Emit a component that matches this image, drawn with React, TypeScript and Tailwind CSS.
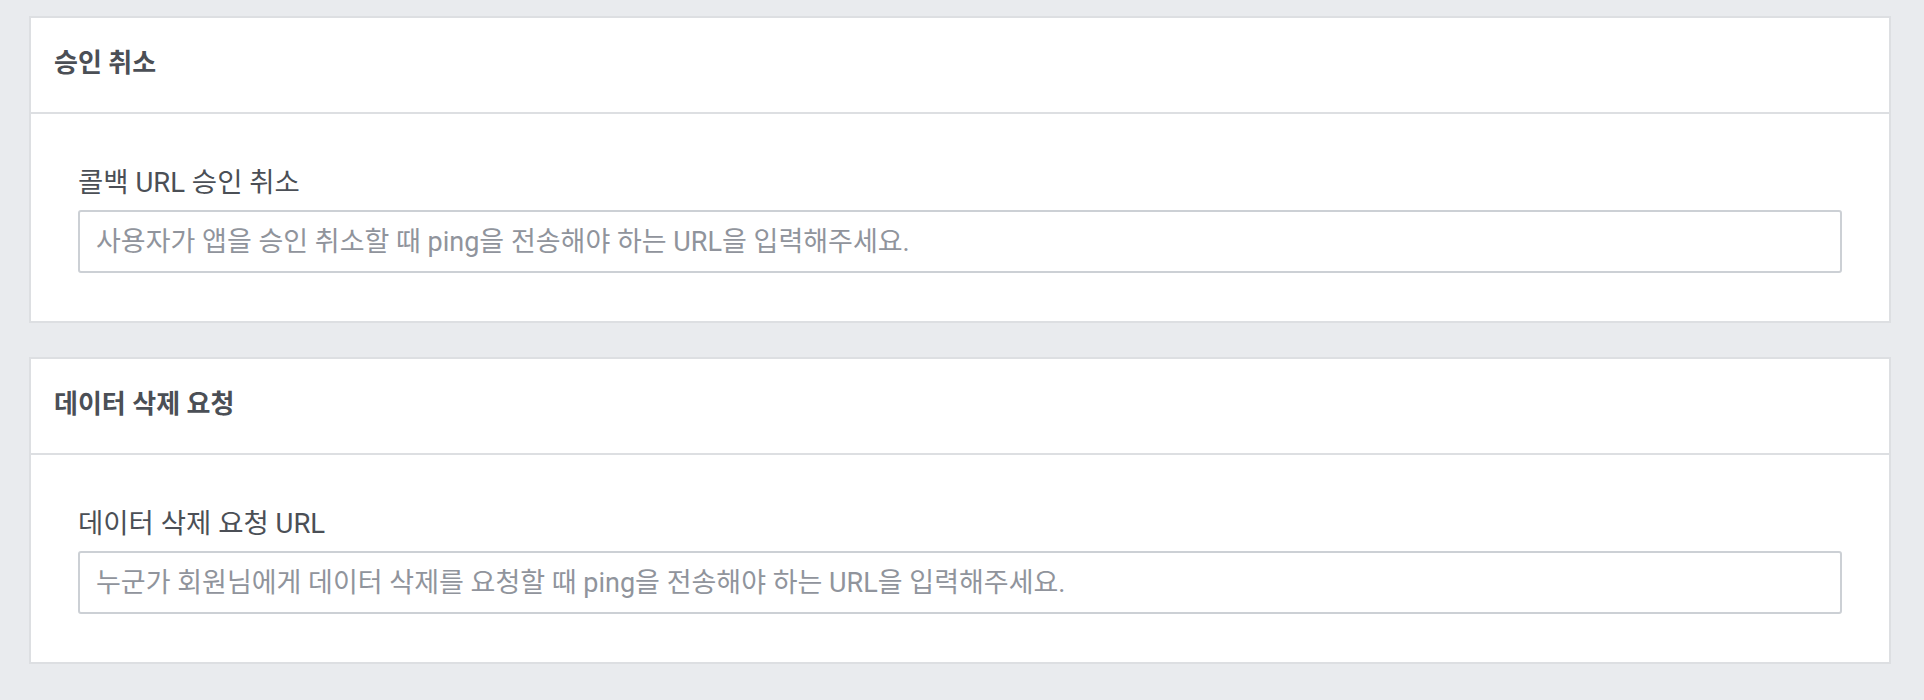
import React from 'react';

interface SectionProps {
    title: string;
    label: string;
    placeholder: string;
}

function Section({ title, label, placeholder }: SectionProps) {
    return (
        <div className="bg-white border-2 border-[#dddfe2]">
            {/* Header */}
            <div className="h-[96px] flex items-center pl-[23px] pb-[3px] border-b-2 border-[#dddfe2]">
                <h2 className="text-[26px] font-bold text-[#4b4f56]">{title}</h2>
            </div>

            {/* Body */}
            <div className="px-[47px] pt-[51px] pb-[48px]">
                <label className="block text-[27.5px] leading-[36px] text-[#4b4f56] mb-[9px]">{label}</label>
                <input
                    type="text"
                    placeholder={placeholder}
                    className="w-full h-[63px] px-[16px] border-2 border-[#ccd0d5] rounded-[3px] text-[27px] text-[#1d2129] placeholder:text-[#90949c] outline-none"
                />
            </div>
        </div>
    );
}

export default function App() {
    return (
        <div
            className="min-h-[700px] bg-[#e9ebee] pt-[16px] pl-[29px] pr-[33px] flex flex-col gap-[34px]"
            style={{ fontFamily: "Roboto, 'Noto Sans CJK KR', sans-serif" }}
        >
            <Section
                title="승인 취소"
                label="콜백 URL 승인 취소"
                placeholder="사용자가 앱을 승인 취소할 때 ping을 전송해야 하는 URL을 입력해주세요."
            />
            <Section
                title="데이터 삭제 요청"
                label="데이터 삭제 요청 URL"
                placeholder="누군가 회원님에게 데이터 삭제를 요청할 때 ping을 전송해야 하는 URL을 입력해주세요."
            />
        </div>
    );
}
